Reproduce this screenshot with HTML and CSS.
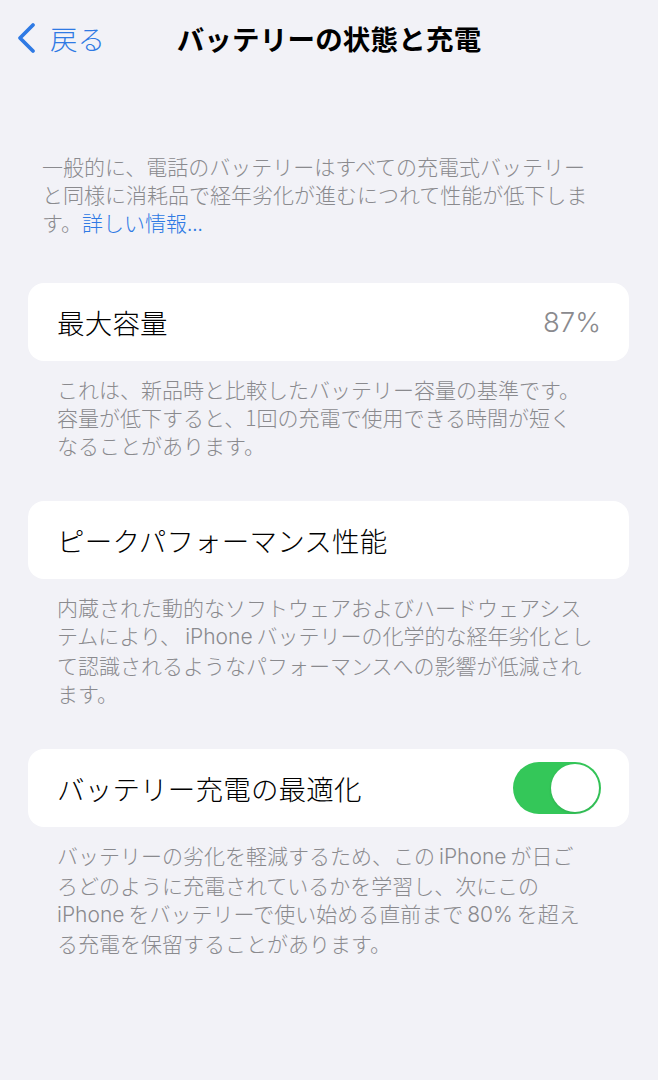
FILE: index.html
```html
<!DOCTYPE html>
<html lang="ja">
<head>
    <meta charset="UTF-8">
    <meta name="viewport" content="width=device-width, initial-scale=1.0">
    <title>バッテリーの状態と充電</title>
    <link rel="stylesheet" href="styles.css">
</head>
<body>
    <div class="screen">
        <header class="navbar">
            <a class="back" href="#">
                <svg class="chevron" width="22" height="32" viewBox="0 0 22 32">
                    <polyline points="18,3 5,16 18,29" fill="none" stroke="currentColor" stroke-width="3.8" stroke-linecap="round" stroke-linejoin="round"/>
                </svg>
                <span>戻る</span>
            </a>
            <h1 class="title">バッテリーの状態と充電</h1>
            <div></div>
        </header>

        <p class="intro">
            一般的に、電話のバッテリーはすべての充電式バッテリー<br>と同様に消耗品で経年劣化が進むにつれて性能が低下しま<br>す。<a class="link" href="#">詳しい情報...</a>
        </p>

        <section class="group">
            <div class="cell">
                <span class="label">最大容量</span>
                <span class="value">87%</span>
            </div>
            <p class="footer">
                これは、新品時と比較したバッテリー容量の基準です。<br>容量が低下すると、1回の充電で使用できる時間が短く<br>なることがあります。
            </p>
        </section>

        <section class="group">
            <div class="cell">
                <span class="label">ピークパフォーマンス性能</span>
            </div>
            <p class="footer">
                内蔵された動的なソフトウェアおよびハードウェアシス<br>テムにより、<span class="en">iPhone</span>バッテリーの化学的な経年劣化とし<br>て認識されるようなパフォーマンスへの影響が低減され<br>ます。
            </p>
        </section>

        <section class="group">
            <div class="cell">
                <span class="label">バッテリー充電の最適化</span>
                <label class="switch">
                    <input type="checkbox" checked>
                    <span class="track"><span class="thumb"></span></span>
                </label>
            </div>
            <p class="footer">
                バッテリーの劣化を軽減するため、この<span class="en">iPhone</span>が日ご<br>ろどのように充電されているかを学習し、次にこの<br><span class="en first">iPhone</span>をバッテリーで使い始める直前まで<span class="en">80%</span>を超え<br>る充電を保留することがあります。
            </p>
        </section>
    </div>
</body>
</html>
```

FILE: styles.css
```css
body {
    margin: 0;
    padding: 0;
    background-color: #f2f2f7;
    font-family: "Noto Sans CJK JP", "Noto Sans", sans-serif;
    font-weight: 300;
    color: #000;
}

.screen {
    width: 658px;
    min-height: 1080px;
}

.navbar {
    height: 76px;
    display: grid;
    grid-template-columns: 1fr auto 1fr;
    align-items: center;
}

.back {
    display: flex;
    align-items: center;
    gap: 13px;
    padding-left: 15px;
    color: #2f7ae4;
    text-decoration: none;
    font-size: 27.5px;
}

.chevron {
    display: block;
}

.title {
    margin: 0;
    font-size: 27.5px;
    font-weight: 700;
    letter-spacing: 0.2px;
}

.intro {
    margin: 76px 0 47px;
    padding: 0 30px 0 42px;
    font-size: 21px;
    line-height: 28px;
    color: #8a8a8e;
}

.link {
    color: #2f7ae4;
    text-decoration: none;
}

.group {
    margin: 0 29px 42px 28px;
}

.cell {
    height: 78px;
    display: flex;
    align-items: center;
    justify-content: space-between;
    padding: 0 28px 0 29px;
    background-color: #ffffff;
    border-radius: 16px;
}

.label {
    font-size: 27.5px;
    letter-spacing: 0.2px;
}

.value {
    font-family: "Inter", "Noto Sans", sans-serif;
    font-size: 27.5px;
    color: #8a8a8e;
}

.footer {
    margin: 0;
    padding: 14px 10px 0 29px;
    font-size: 21px;
    line-height: 28px;
    color: #8a8a8e;
}

.en {
    font-family: "Inter", "Noto Sans", sans-serif;
    margin: 0 4px;
}

.en.first {
    margin-left: 0;
}

.switch input {
    display: none;
}

.track {
    display: block;
    width: 88px;
    height: 52px;
    border-radius: 26px;
    background-color: #34c759;
    position: relative;
}

.thumb {
    position: absolute;
    top: 2px;
    right: 2px;
    width: 48px;
    height: 48px;
    border-radius: 50%;
    background-color: #ffffff;
    box-shadow: 0 1px 3px rgba(0, 0, 0, 0.12);
}
```
